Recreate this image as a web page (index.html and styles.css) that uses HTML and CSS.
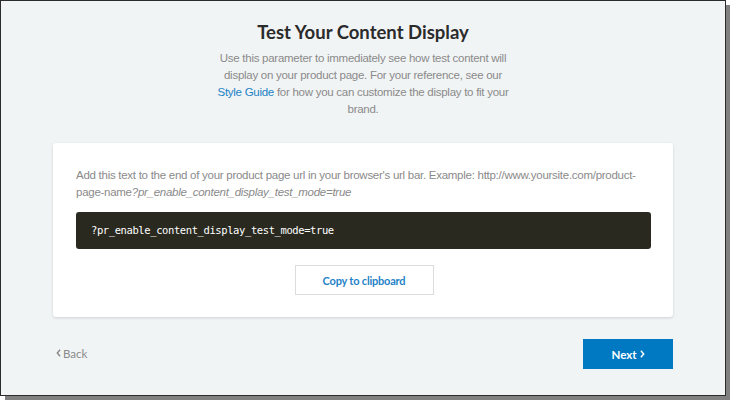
FILE: index.html
```html
<!DOCTYPE html>
<html>
<head>
<meta charset="utf-8">
<link rel="stylesheet" href="styles.css">
</head>
<body>
<div class="frame">
  <header class="intro">
    <h1 class="title">Test Your Content Display</h1>
    <p class="lead">Use this parameter to immediately see how test content will display on your product page. For your reference, see our <a class="link" href="#">Style Guide</a> for how you can customize the display to fit your brand.</p>
  </header>
  <section class="card">
    <p class="hint">Add this text to the end of your product page url in your browser's url bar. Example: http://www.yoursite.com/product-page-name<em>?pr_enable_content_display_test_mode=true</em></p>
    <div class="code">?pr_enable_content_display_test_mode=true</div>
    <div class="copy-row"><button class="copy">Copy to clipboard</button></div>
  </section>
  <footer class="nav">
    <a class="back" href="#"><svg class="chev" viewBox="0 0 6 10" width="5" height="8"><path d="M5 1 L1.5 5 L5 9" fill="none" stroke="currentColor" stroke-width="1.8"/></svg>Back</a>
    <button class="next">Next<svg class="chev" viewBox="0 0 6 10" width="5" height="8"><path d="M1 1 L4.5 5 L1 9" fill="none" stroke="currentColor" stroke-width="1.8"/></svg></button>
  </footer>
</div>
</body>
</html>
```
FILE: styles.css
```css
* { box-sizing: border-box; }
html, body { margin: 0; padding: 0; background: #ffffff; }
body { width: 730px; height: 400px; overflow: hidden; }
.frame {
  width: 726px;
  height: 396px;
  border: 1px solid #2b2b2b;
  background: #f1f4f5;
  box-shadow: 5px 5px 0 #808080;
  padding: 0 52px;
  display: flex;
  flex-direction: column;
}
.intro { text-align: center; padding-top: 19px; }
.title {
  margin: 0;
  font-family: Lato, "Open Sans", sans-serif;
  font-weight: 700;
  font-size: 18.5px;
  line-height: 24px;
  color: #2b2b2b;
}
.lead {
  margin: 6px auto 0;
  width: 300px;
  font-family: "Liberation Sans", Arial, sans-serif;
  font-size: 11.5px;
  letter-spacing: -0.27px;
  line-height: 17px;
  color: #8a8a8a;
}
.link { color: #1a83c6; text-decoration: none; }
.card {
  margin-top: 25px;
  background: #ffffff;
  border-radius: 3px;
  box-shadow: 0 1px 3px rgba(0,0,0,0.14);
  padding: 24px 22px 22px 23px;
}
.hint {
  margin: 0;
  font-family: "Liberation Sans", Arial, sans-serif;
  font-size: 11.5px;
  letter-spacing: -0.27px;
  line-height: 17px;
  color: #8a8a8a;
}
.hint em { font-style: italic; }
.code {
  margin-top: 11px;
  height: 37px;
  background: #29291f;
  border-radius: 3px;
  color: #ffffff;
  font-family: "DejaVu Sans Mono", "Liberation Mono", monospace;
  font-size: 10.5px;
  letter-spacing: -0.4px;
  line-height: 37px;
  padding-left: 15px;
}
.copy-row { display: flex; justify-content: center; margin-top: 16px; }
.copy {
  width: 139px;
  height: 30px;
  background: #ffffff;
  border: 1px solid #dcdcdc;
  color: #1f82c7;
  font-family: Lato, sans-serif;
  font-weight: 700;
  font-size: 11px;
  letter-spacing: -0.2px;
  padding: 0;
  margin-left: 1px;
}
.nav {
  margin-top: 22px;
  display: flex;
  justify-content: space-between;
  align-items: center;
}
.back {
  display: flex;
  align-items: center;
  gap: 2px;
  color: #8a8a8a;
  text-decoration: none;
  font-family: Lato, sans-serif;
  font-size: 11.5px;
  padding-left: 3px;
  margin-top: -2px;
}
.next {
  width: 90px;
  height: 30px;
  background: #0079c2;
  border: none;
  color: #ffffff;
  font-family: Lato, sans-serif;
  font-weight: 700;
  font-size: 11.5px;
  display: flex;
  align-items: center;
  justify-content: center;
  gap: 3px;
  padding: 0;
}
.chev { display: block; }
```
